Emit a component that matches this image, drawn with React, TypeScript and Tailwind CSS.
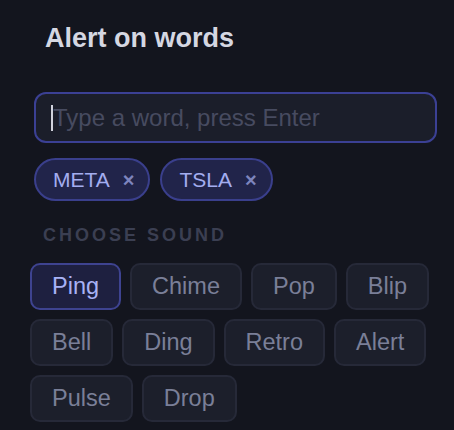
import { useState } from "react";

const SOUNDS = ["Ping", "Chime", "Pop", "Blip", "Bell", "Ding", "Retro", "Alert", "Pulse", "Drop"];

export default function App() {
  const [words, setWords] = useState(["META", "TSLA"]);
  const [sound, setSound] = useState("Ping");

  return (
    <div className="min-h-screen w-full bg-[#13151e] px-[30px] pt-[22px] font-['Liberation_Sans',Arial,sans-serif]">
      <h1 className="ml-[15px] text-[27px] leading-[32px] font-bold text-[#d5d7e2]">Alert on words</h1>

      <div className="ml-[4px] mt-[38px] flex h-[51px] w-[403px] items-center rounded-[12px] border-2 border-[#3b4094] bg-[#1b1e2a] pl-[15px]">
        <span className="h-[26px] w-[2px] bg-[#d0d2dc]" />
        <span className="text-[24px] leading-none text-[#474b60]">Type a word, press Enter</span>
      </div>

      <div className="ml-[4px] mt-[15px] flex gap-[10px]">
        {words.map((w) => (
          <div
            key={w}
            className="flex h-[43px] items-center gap-[13px] rounded-full border-2 border-[#3a3f8c] bg-[#21244a] pl-[17px] pr-[14px]"
          >
            <span className="text-[21px] leading-none text-[#a3adf0]">{w}</span>
            <button
              onClick={() => setWords(words.filter((x) => x !== w))}
              className="text-[20px] leading-none font-bold text-[#7d84bd]"
            >
              ×
            </button>
          </div>
        ))}
      </div>

      <div className="ml-[13px] mt-[22px] text-[18px] leading-[24px] font-bold tracking-[3px] text-[#3b3f52]">
        CHOOSE SOUND
      </div>

      <div className="mt-[16px] flex w-[412px] flex-wrap gap-[9px]">
        {SOUNDS.map((s) => (
          <button
            key={s}
            onClick={() => setSound(s)}
            className={
              s === sound
                ? "flex h-[47px] items-center rounded-[10px] border-2 border-[#3e4390] bg-[#1e2040] px-[20px] text-[23.5px] text-[#a8b2f5]"
                : "flex h-[47px] items-center rounded-[10px] border-2 border-[#262938] bg-[#1c1f2b] px-[20px] text-[23.5px] text-[#7a7f98]"
            }
          >
            {s}
          </button>
        ))}
      </div>
    </div>
  );
}
